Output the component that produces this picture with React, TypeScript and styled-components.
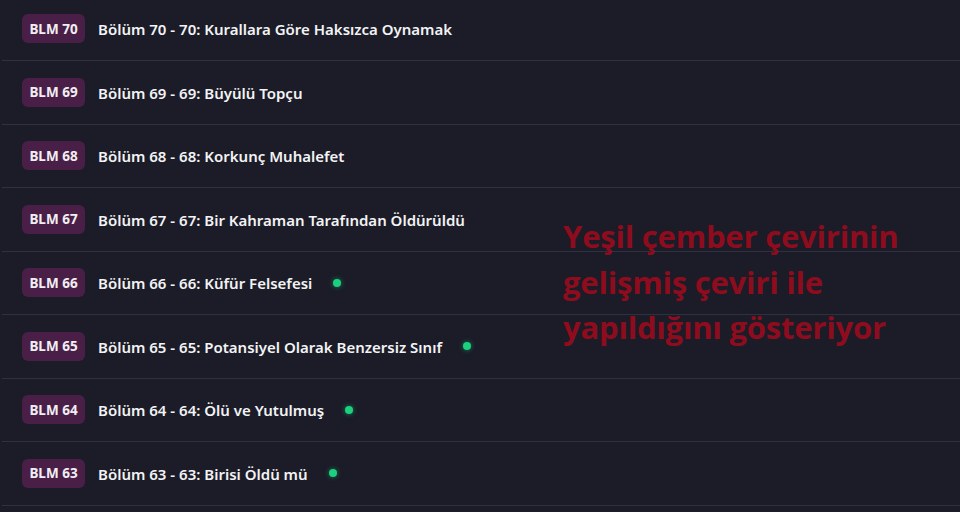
import React from "react";
import styled, { createGlobalStyle } from "styled-components";

const GlobalStyle = createGlobalStyle`
  html, body {
    margin: 0;
    padding: 0;
    background: #1b1c27;
    font-family: "Noto Sans", "Open Sans", sans-serif;
    overflow: hidden;
  }
`;

const Page = styled.div`
  position: relative;
  width: 960px;
  height: 512px;
  overflow: hidden;
  background: #1b1c27;
`;

const List = styled.ul`
  list-style: none;
  margin: -2.5px 0 0 2px;
  padding: 0;
`;

const Row = styled.li`
  display: flex;
  align-items: center;
  height: 62.5px;
  padding-left: 20px;
  border-bottom: 1px solid #2f3140;
`;

const Badge = styled.span`
  display: inline-flex;
  align-items: center;
  justify-content: center;
  width: 63px;
  height: 29px;
  border-radius: 6px;
  background: #4a1f47;
  color: #f1eef3;
  font-size: 13.5px;
  font-weight: 700;
  margin-right: 13px;
`;

const Title = styled.span`
  color: #f3f3f5;
  font-size: 15px;
  font-weight: 600;
  line-height: 1;
  padding-top: 2px;
`;

const Dot = styled.span`
  width: 8px;
  height: 8px;
  border-radius: 50%;
  margin-left: 21px;
  background: #1bd17f;
  box-shadow: 0 0 5px rgba(27, 209, 127, 0.55);
`;

const Note = styled.div`
  position: absolute;
  left: 563px;
  top: 214px;
  color: #8e0c1d;
  font-family: "Open Sans", "Noto Sans", sans-serif;
  font-size: 31px;
  font-weight: 700;
  line-height: 45.5px;
  letter-spacing: -0.2px;
`;

const chapters = [
  { no: 70, name: "Kurallara Göre Haksızca Oynamak", advanced: false },
  { no: 69, name: "Büyülü Topçu", advanced: false },
  { no: 68, name: "Korkunç Muhalefet", advanced: false },
  { no: 67, name: "Bir Kahraman Tarafından Öldürüldü", advanced: false },
  { no: 66, name: "Küfür Felsefesi", advanced: true },
  { no: 65, name: "Potansiyel Olarak Benzersiz Sınıf", advanced: true },
  { no: 64, name: "Ölü ve Yutulmuş", advanced: true },
  { no: 63, name: "Birisi Öldü mü", advanced: true },
];

export default function App() {
  return (
    <Page>
      <GlobalStyle />
      <List>
        {chapters.map((c) => (
          <Row key={c.no}>
            <Badge>BLM {c.no}</Badge>
            <Title>
              Bölüm {c.no} - {c.no}: {c.name}
            </Title>
            {c.advanced && <Dot />}
          </Row>
        ))}
      </List>
      <Note>
        Yeşil çember çevirinin
        <br />
        gelişmiş çeviri ile
        <br />
        yapıldığını gösteriyor
      </Note>
    </Page>
  );
}
